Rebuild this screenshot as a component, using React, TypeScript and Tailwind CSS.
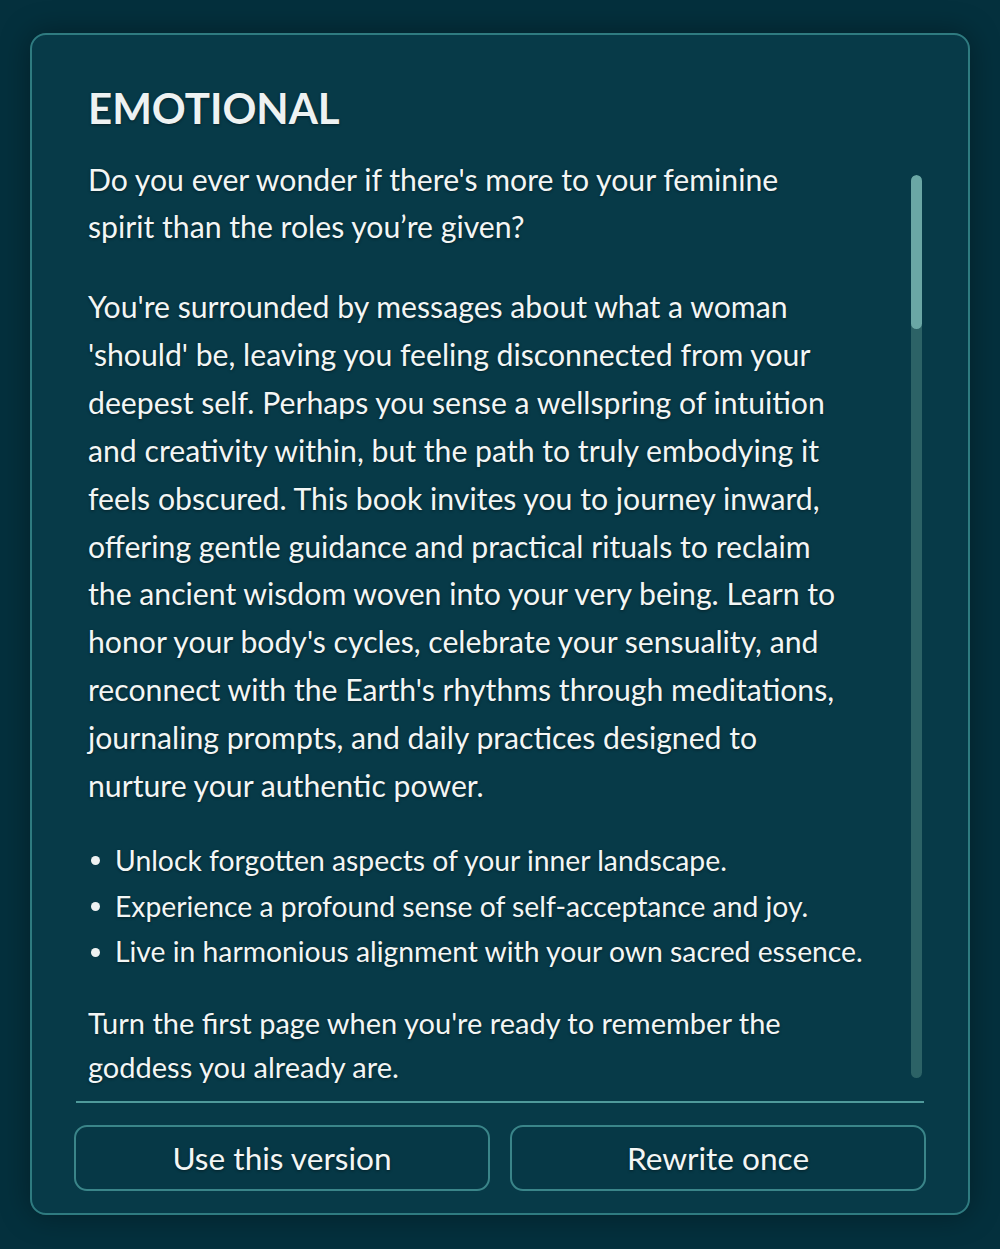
import React from "react";

const shadow = "[text-shadow:0_1px_3px_rgba(0,0,0,0.45)]";

export default function App() {
  return (
    <div
      className="min-h-[1249px] w-full bg-[#04303d] pt-[33px] px-[30px] pb-[34px]"
      style={{ fontFamily: "Lato, 'Noto Sans', sans-serif" }}
    >
      <div className="flex h-[1182px] flex-col rounded-[16px] border-2 border-[#2f7b80] bg-[#073a48] shadow-[0_0_30px_rgba(0,0,0,0.35)]">
        <div className="flex flex-1 flex-row">
          <div className={`flex-1 pl-[56px] pt-[47px] text-[#f3f6f5] ${shadow}`}>
            <h1 className="text-[42px] font-bold leading-[52px] text-[#eef2f2]">
              EMOTIONAL
            </h1>
            <p className="mt-[22px] text-[30.2px] leading-[47px]">
              Do you ever wonder if there's more to your feminine
              <br />
              spirit than the roles you’re given?
            </p>
            <p className="mt-[33px] text-[30.2px] leading-[47.9px]">
              You're surrounded by messages about what a woman
              <br />
              'should' be, leaving you feeling disconnected from your
              <br />
              deepest self. Perhaps you sense a wellspring of intuition
              <br />
              and creativity within, but the path to truly embodying it
              <br />
              feels obscured. This book invites you to journey inward,
              <br />
              offering gentle guidance and practical rituals to reclaim
              <br />
              the ancient wisdom woven into your very being. Learn to
              <br />
              honor your body's cycles, celebrate your sensuality, and
              <br />
              reconnect with the Earth's rhythms through meditations,
              <br />
              journaling prompts, and daily practices designed to
              <br />
              nurture your authentic power.
            </p>
            <ul className="mt-[28px] text-[28.3px] leading-[45.7px]">
              {[
                "Unlock forgotten aspects of your inner landscape.",
                "Experience a profound sense of self-acceptance and joy.",
                "Live in harmonious alignment with your own sacred essence.",
              ].map((t) => (
                <li key={t} className="flex items-center">
                  <span className="mr-[15px] ml-[3px] inline-block h-[9px] w-[9px] rounded-full bg-[#eef2f2]" />
                  <span>{t}</span>
                </li>
              ))}
            </ul>
            <p className="mt-[26px] text-[29px] leading-[44px]">
              Turn the first page when you're ready to remember the
              <br />
              goddess you already are.
            </p>
          </div>
          <div className="mr-[46px] mt-[140px] mb-[23px] flex w-[11px] flex-col overflow-hidden rounded-full bg-[#2c6266]">
            <div className="h-[154px] w-full rounded-full bg-[#6aa7a5]" />
          </div>
        </div>
        <div className="mx-[44px] h-[2px] bg-[#4f9a9b]" />
        <div className="mx-[42px] mt-[22px] mb-[22px] flex gap-[20px]">
          <button className={`flex h-[66px] flex-1 items-center justify-center rounded-[13px] border-2 border-[#3a8589] bg-[#063846] pt-[2px] text-[31.6px] text-[#f3f6f5] ${shadow}`}>
            Use this version
          </button>
          <button className={`flex h-[66px] flex-1 items-center justify-center rounded-[13px] border-2 border-[#3a8589] bg-[#063846] pt-[2px] text-[31.6px] text-[#f3f6f5] ${shadow}`}>
            Rewrite once
          </button>
        </div>
      </div>
    </div>
  );
}
